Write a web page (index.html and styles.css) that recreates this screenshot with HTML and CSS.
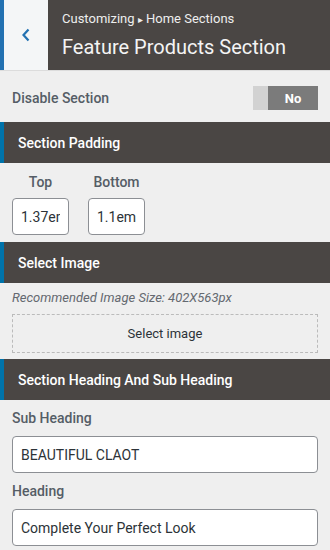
FILE: index.html
```html
<!DOCTYPE html>
<html>
<head>
<meta charset="utf-8">
<link rel="stylesheet" href="styles.css">
</head>
<body>
<header class="head">
  <div class="back">
    <svg width="12" height="16" viewBox="0 0 12 16"><path d="M8.5 2.5 L3.5 8 L8.5 13.5" fill="none" stroke="#2271b1" stroke-width="2.2"/></svg>
  </div>
  <div class="titles">
    <div class="crumb">Customizing <span class="tri">▸</span> Home Sections</div>
    <div class="title">Feature Products Section</div>
  </div>
</header>

<div class="row">
  <span class="row-label">Disable Section</span>
  <div class="toggle"><span class="t-off"></span><span class="t-on">No</span></div>
</div>

<div class="bar">Section Padding</div>
<div class="pad">
  <div class="pcol">
    <span class="plabel">Top</span>
    <input class="pinput" type="text" value="1.37em">
  </div>
  <div class="pcol">
    <span class="plabel">Bottom</span>
    <input class="pinput" type="text" value="1.1em">
  </div>
</div>

<div class="bar">Select Image</div>
<div class="img">
  <div class="hint">Recommended Image Size: 402X563px</div>
  <div class="drop">Select image</div>
</div>

<div class="bar">Section Heading And Sub Heading</div>
<div class="fields">
  <label class="flabel">Sub Heading</label>
  <input class="finput" type="text" value="BEAUTIFUL CLAOT">
  <label class="flabel">Heading</label>
  <input class="finput" type="text" value="Complete Your Perfect Look">
</div>
</body>
</html>
```

FILE: styles.css
```css
* { box-sizing: border-box; }
body {
  margin: 0;
  background: #efefef;
  font-family: Roboto, "Liberation Sans", sans-serif;
  color: #555d66;
  overflow: hidden;
}
.head {
  display: flex;
  height: 71px;
  border-bottom: 1px solid #dcdcdc;
}
.back {
  width: 48px;
  border-left: 4px solid #2271b1;
  background: #f4f6f7;
  display: flex;
  align-items: center;
  justify-content: center;
}
.titles {
  flex: 1;
  background: #4a4644;
  padding: 11px 14px 0;
  color: #fff;
}
.crumb {
  font-size: 13px;
  line-height: 16px;
  color: #eee;
}
.tri { font-size: 10px; }
.title {
  font-size: 20px;
  line-height: 24px;
  margin-top: 7px;
  color: #f4f4f4;
}
.row {
  height: 51px;
  display: flex;
  align-items: center;
  justify-content: space-between;
  padding: 3px 12px 0;
}
.row-label {
  font-size: 14px;
  font-weight: 500;
}
.toggle {
  display: flex;
  height: 24px;
  width: 65px;
}
.t-off { width: 15px; background: #d2d2d2; }
.t-on {
  flex: 1;
  background: #7b7b7b;
  color: #fff;
  font-size: 13px;
  font-weight: 700;
  display: flex;
  align-items: center;
  justify-content: center;
}
.bar {
  height: 41px;
  background: #4a4644;
  border-left: 4px solid #0073aa;
  color: #fff;
  font-size: 14px;
  font-weight: 500;
  display: flex;
  align-items: center;
  padding-left: 14px;
}
.pad {
  display: flex;
  gap: 19px;
  padding: 9px 12px 7px;
}
.pcol {
  display: flex;
  flex-direction: column;
  align-items: center;
  gap: 6px;
}
.plabel {
  font-size: 14px;
  font-weight: 500;
  line-height: 20px;
}
.pinput {
  width: 57px;
  height: 37px;
  border: 1px solid #8c8f94;
  border-radius: 4px;
  background: #fff;
  font-family: Roboto, "Liberation Sans", sans-serif;
  font-size: 14px;
  color: #2c3338;
  padding: 0 8px;
  text-align: center;
}
.img {
  padding: 7px 12px 6px;
}
.hint {
  font-size: 13px;
  font-style: italic;
  line-height: 16px;
  color: #646970;
}
.drop {
  margin-top: 8px;
  height: 39px;
  border: 1px dashed #bbb;
  display: flex;
  align-items: center;
  justify-content: center;
  font-size: 13px;
  color: #2c3338;
}
.fields {
  display: flex;
  flex-direction: column;
  padding: 8px 12px 0;
}
.flabel {
  font-size: 14px;
  font-weight: 500;
  line-height: 20px;
  margin-bottom: 8px;
}
.finput {
  height: 37px;
  width: 100%;
  border: 1px solid #8c8f94;
  border-radius: 4px;
  background: #fff;
  font-family: Roboto, "Liberation Sans", sans-serif;
  font-size: 14px;
  color: #2c3338;
  padding: 0 8px;
  margin-bottom: 8px;
}
```
